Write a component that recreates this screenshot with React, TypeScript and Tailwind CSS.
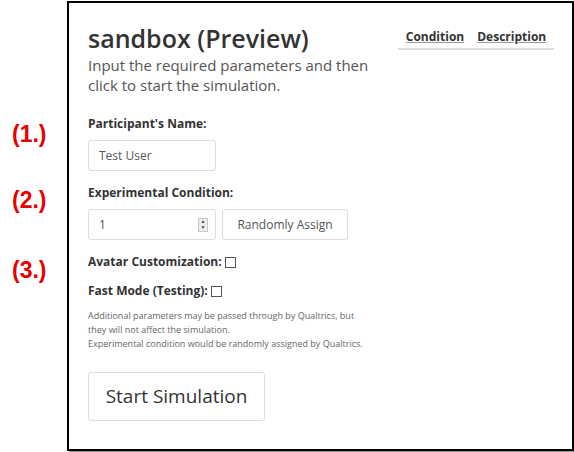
import * as React from 'react';

const font = { fontFamily: '"Open Sans", "Noto Sans", sans-serif' };

const Spinner = () => (
  <div className="flex flex-col w-[10px] h-[14px] border border-[#c8c8c8] bg-[#eee]">
    <div className="flex-1 flex items-center justify-center text-[5px] leading-none text-[#444]">▲</div>
    <div className="flex-1 flex items-center justify-center text-[5px] leading-none text-[#444]">▼</div>
  </div>
);

const Checkbox = () => <span className="inline-block w-[11px] h-[11px] border border-[#555] bg-white ml-[3px] align-middle" />;

export default function App() {
  return (
    <div className="w-[574px] h-[452px] bg-white flex" style={font}>
      <div className="w-[67px] flex flex-col pl-3 text-[23px] font-bold text-[#e60000]" style={{ fontFamily: '"Liberation Sans", Arial, sans-serif' }}>
        <span className="mt-[120px] leading-7">(1.)</span>
        <span className="mt-[38px] leading-7">(2.)</span>
        <span className="mt-[42px] leading-7">(3.)</span>
      </div>

      <div className="mt-px w-[507px] h-[450px] border-2 border-black shadow-[2px_2px_0_#9a9a9a] flex pl-[19px] pt-[19px]">
        <div className="w-[300px] flex flex-col text-[#333]">
          <h1 className="text-[25px] font-semibold leading-8 text-[#333]">sandbox (Preview)</h1>
          <p className="text-[15px] leading-5 text-[#555] mt-px">
            Input the required parameters and then
            <br />
            click to start the simulation.
          </p>

          <label className="mt-[21px] text-[12px] font-bold leading-4 text-[#333]">Participant&apos;s Name:</label>
          <div className="mt-[8px] w-[128px] h-[31px] border border-[#ddd] rounded-[3px] flex items-center px-[10px] text-[12px] text-[#555]">
            Test User
          </div>

          <label className="mt-[14px] text-[12px] font-bold leading-4 text-[#333]">Experimental Condition:</label>
          <div className="mt-[8px] flex gap-[6px]">
            <div className="w-[128px] h-[31px] border border-[#ddd] rounded-[3px] flex items-center justify-between pl-[10px] pr-[7px] text-[12px] text-[#555]">
              <span>1</span>
              <Spinner />
            </div>
            <div className="w-[126px] h-[31px] border border-[#ddd] rounded-[3px] flex items-center justify-center text-[12px] text-[#555]">
              Randomly Assign
            </div>
          </div>

          <div className="mt-[14px] text-[12px] font-bold leading-4 text-[#333] flex items-center">
            Avatar Customization:<Checkbox />
          </div>
          <div className="mt-[13px] text-[12px] font-bold leading-4 text-[#333] flex items-center">
            Fast Mode (Testing):<Checkbox />
          </div>

          <p className="mt-[10px] text-[9px] leading-[14px] text-[#666] whitespace-nowrap">
            Additional parameters may be passed through by Qualtrics, but
            <br />
            they will not affect the simulation.
            <br />
            Experimental condition would be randomly assigned by Qualtrics.
          </p>

          <div className="mt-[21px] w-[177px] h-[49px] border border-[#ddd] rounded-[3px] flex items-center justify-center text-[19px] text-[#333]">
            Start Simulation
          </div>
        </div>

        <div className="ml-[10px] mt-[6px] w-[156px] h-[22px] border-b-2 border-[#ddd] flex justify-center gap-[13px] text-[12px] font-bold text-[#333]">
          <span className="underline decoration-[#999]">Condition</span>
          <span className="underline decoration-[#999]">Description</span>
        </div>
      </div>
    </div>
  );
}
